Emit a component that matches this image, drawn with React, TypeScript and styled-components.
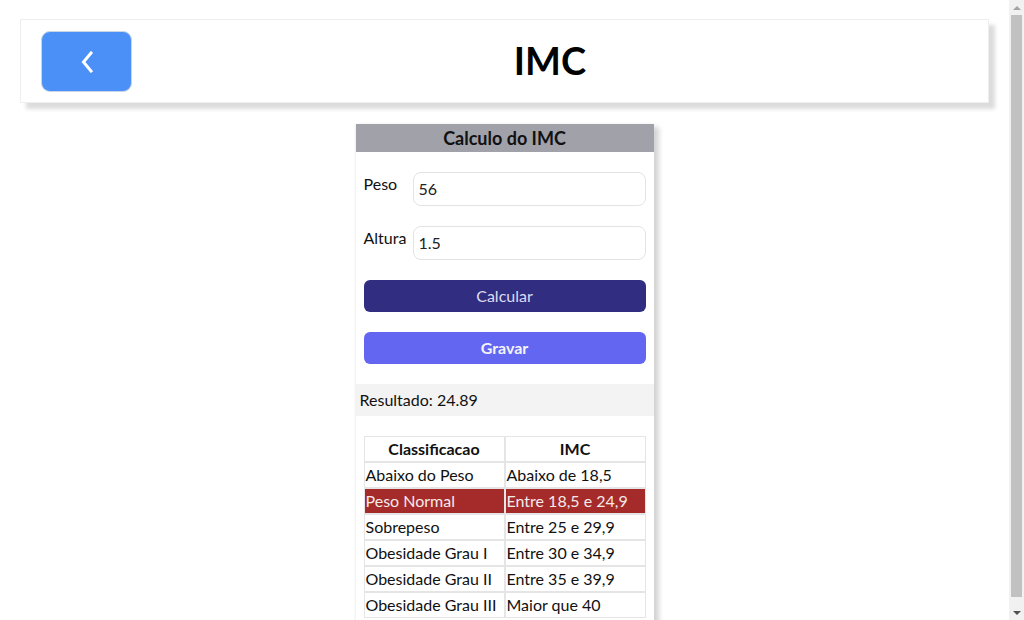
import React from "react";
import styled, { createGlobalStyle } from "styled-components";

const Global = createGlobalStyle`
  html, body { margin: 0; padding: 0; background: #fff; overflow: hidden; }
  body { font-family: "Lato", "Noto Sans", sans-serif; color: #111; }
  * { box-sizing: border-box; }
`;

const Viewport = styled.div`
  display: flex;
  height: 620px;
  overflow: hidden;
`;

const Page = styled.main`
  flex: 1;
  min-width: 0;
  padding: 19px 20px 10px;
`;

const ScrollTrack = styled.div`
  width: 15px;
  flex: none;
  background: #f1f1f1;
  display: flex;
  flex-direction: column;
  align-items: center;
`;

const ScrollArrow = styled.div<{ $down?: boolean }>`
  height: 15px;
  width: 100%;
  display: flex;
  align-items: center;
  justify-content: center;
  &::before {
    content: "";
    border-left: 4px solid transparent;
    border-right: 4px solid transparent;
    ${(p) =>
      p.$down ? "border-top: 4px solid #505050;" : "border-bottom: 4px solid #a3a3a3;"}
  }
`;

const ScrollThumb = styled.div`
  width: 11px;
  flex: 1;
  margin-bottom: 8px;
  background: #c1c1c1;
`;

const Header = styled.header`
  display: flex;
  align-items: center;
  background: #fff;
  border: 1px solid #eee;
  padding: 11px 20px 10px;
  box-shadow: 6px 6px 4px #dcdcdc;
`;

const BackButton = styled.button`
  width: 91px;
  height: 61px;
  border-radius: 9px;
  border: 1px solid #c9d6ea;
  background: #4a90f6;
  display: flex;
  align-items: center;
  justify-content: center;
  cursor: pointer;
  padding: 0;
`;

const Title = styled.h1`
  flex: 1;
  margin: 0;
  padding-bottom: 4px;
  text-align: center;
  font-size: 38px;
  font-weight: 700;
  color: #000;
`;

const Card = styled.section`
  width: 298px;
  margin: 21px auto 0;
  background: #fff;
  box-shadow: 5px 3px 5px #d4d4d4, -1px 0 2px #eee;
  padding-bottom: 8px;
`;

const CardTitle = styled.div`
  height: 28px;
  background: #a1a1aa;
  display: flex;
  align-items: center;
  justify-content: center;
  font-weight: 700;
  font-size: 18px;
`;

const Form = styled.div`
  display: flex;
  flex-direction: column;
  gap: 20px;
  padding: 20px 8px;
`;

const Field = styled.label`
  display: grid;
  grid-template-columns: 49px 1fr;
  align-items: start;
`;

const FieldLabel = styled.span`
  font-size: 16px;
  padding-top: 2px;
`;

const Input = styled.input`
  height: 34px;
  border: 1px solid #e3e3e3;
  border-radius: 8px;
  padding: 0 5px 1px;
  font-family: inherit;
  font-size: 16px;
  color: #222;
  outline: none;
`;

const ActionButton = styled.button<{ $variant: "dark" | "light" }>`
  height: 32px;
  border: none;
  border-radius: 6px;
  padding: 0 0 2px;
  font-family: inherit;
  font-size: 16px;
  color: ${(p) => (p.$variant === "dark" ? "#dcdcf0" : "#f4f4fb")};
  background: ${(p) => (p.$variant === "dark" ? "#312e81" : "#6366f1")};
  font-weight: ${(p) => (p.$variant === "dark" ? 400 : 700)};
  cursor: pointer;
`;

const Result = styled.div`
  height: 32px;
  background: #f3f3f3;
  display: flex;
  align-items: center;
  padding: 0 4px 2px;
  font-size: 16px;
`;

const TableWrap = styled.div`
  padding: 20px 8px 0;
`;

const Table = styled.table`
  width: 100%;
  border-collapse: separate;
  border-spacing: 0;
  font-size: 16px;
  table-layout: fixed;
`;

const Th = styled.th`
  height: 26px;
  border: 1px solid #e5e5e5;
  font-weight: 700;
  padding: 0 0 2px;
`;

const Td = styled.td<{ $hl?: boolean }>`
  height: 26px;
  border: 1px solid #e5e5e5;
  padding: 0 0 2px 1px;
  white-space: nowrap;
  background: ${(p) => (p.$hl ? "#a52a2a" : "transparent")};
  color: ${(p) => (p.$hl ? "#f3eaea" : "#111")};
`;

const rows: [string, string][] = [
  ["Abaixo do Peso", "Abaixo de 18,5"],
  ["Peso Normal", "Entre 18,5 e 24,9"],
  ["Sobrepeso", "Entre 25 e 29,9"],
  ["Obesidade Grau I", "Entre 30 e 34,9"],
  ["Obesidade Grau II", "Entre 35 e 39,9"],
  ["Obesidade Grau III", "Maior que 40"],
];

export default function App() {
  return (
    <>
      <Global />
      <Viewport>
        <Page>
          <Header>
            <BackButton aria-label="Voltar">
              <svg width="14" height="22" viewBox="0 0 14 22" fill="none">
                <path d="M11 2 L3.5 11 L11 20" stroke="#fff" strokeWidth="3" strokeLinecap="square" />
              </svg>
            </BackButton>
            <Title>IMC</Title>
          </Header>
          <Card>
            <CardTitle>Calculo do IMC</CardTitle>
            <Form>
              <Field>
                <FieldLabel>Peso</FieldLabel>
                <Input defaultValue="56" />
              </Field>
              <Field>
                <FieldLabel>Altura</FieldLabel>
                <Input defaultValue="1.5" />
              </Field>
              <ActionButton $variant="dark">Calcular</ActionButton>
              <ActionButton $variant="light">Gravar</ActionButton>
            </Form>
            <Result>Resultado: 24.89</Result>
            <TableWrap>
              <Table>
                <thead>
                  <tr>
                    <Th>Classificacao</Th>
                    <Th>IMC</Th>
                  </tr>
                </thead>
                <tbody>
                  {rows.map(([c, v], i) => (
                    <tr key={c}>
                      <Td $hl={i === 1}>{c}</Td>
                      <Td $hl={i === 1}>{v}</Td>
                    </tr>
                  ))}
                </tbody>
              </Table>
            </TableWrap>
          </Card>
        </Page>
        <ScrollTrack aria-hidden="true">
          <ScrollArrow />
          <ScrollThumb />
          <ScrollArrow $down />
        </ScrollTrack>
      </Viewport>
    </>
  );
}
